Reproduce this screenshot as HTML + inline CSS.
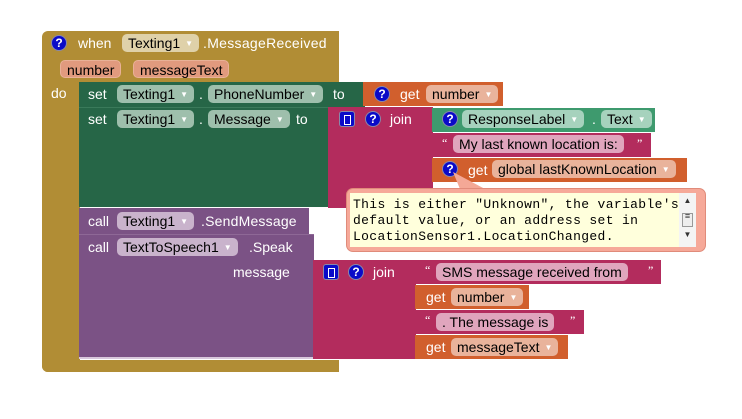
<!DOCTYPE html>
<html><head><style>
*{margin:0;padding:0;box-sizing:border-box}
body{width:742px;height:419px;background:#fff;position:relative;overflow:hidden;font-family:"Liberation Sans",Arial,sans-serif;font-size:14px;color:#fff}
.b{position:absolute}
.t{position:absolute;white-space:nowrap;line-height:17px}
.p{position:absolute;height:18px;line-height:18px;border-radius:5px;color:#000;padding:0 6px;white-space:nowrap}
.p i{font-style:normal;font-size:8px;color:#fff;margin-left:5px;vertical-align:2px}
.q{position:absolute;width:16px;height:16px;border-radius:50%;background:#0a0ac8;border:1px solid #88a;color:#fff;font-weight:bold;font-size:12px;line-height:14px;text-align:center}
.m{position:absolute;width:16px;height:16px;border-radius:3px;background:#0a0ac8;border:1px solid #88a}
.m:after{content:"";position:absolute;left:4px;top:3px;width:5px;height:8px;border:1px solid #fff}
.o{position:absolute;font-size:12px;line-height:12px;font-family:"Liberation Serif",serif}
</style></head><body>
<!-- event block -->
<div class="b" style="left:42px;top:31px;width:297px;height:51px;background:#b18d35;border-radius:6px 0 0 0"></div>
<div class="b" style="left:42px;top:80px;width:38px;height:292px;background:#b18d35;border-radius:0 0 0 6px"></div>
<div class="b" style="left:42px;top:360px;width:297px;height:12px;background:#b18d35;border-radius:0 0 0 6px"></div>
<div class="q" style="left:51px;top:35px">?</div>
<div class="t" style="left:78px;top:35px">when</div>
<div class="p" style="left:122px;top:34px;background:#dfd1a9">Texting1<i>▼</i></div>
<div class="t" style="left:203px;top:35px;letter-spacing:0.3px">.MessageReceived</div>
<div class="p" style="left:60px;top:60px;background:#e19a7e;border:1px solid #e9b197">number</div>
<div class="p" style="left:133px;top:60px;background:#e19a7e;border:1px solid #e9b197">messageText</div>
<div class="t" style="left:51px;top:85px">do</div>
<!-- set phone -->
<div class="b" style="left:79px;top:82px;width:286px;height:25px;background:#266647"></div>
<div class="t" style="left:88px;top:86px">set</div>
<div class="p" style="left:117px;top:85px;background:#9ebfac">Texting1<i>▼</i></div>
<div class="t" style="left:199px;top:86px">.</div>
<div class="p" style="left:208px;top:85px;background:#9ebfac">PhoneNumber<i>▼</i></div>
<div class="t" style="left:333px;top:86px">to</div>
<div class="b" style="left:363px;top:82px;width:140px;height:24px;background:#d15f2d"></div>
<div class="q" style="left:374px;top:86px">?</div>
<div class="t" style="left:400px;top:86px">get</div>
<div class="p" style="left:426px;top:85px;background:#e9b39b">number<i>▼</i></div>
<!-- set message -->
<div class="b" style="left:79px;top:107px;width:250px;height:100px;background:#266647;border-top:1px solid #3a7a5a"></div>
<div class="t" style="left:88px;top:111px">set</div>
<div class="p" style="left:117px;top:110px;background:#9ebfac">Texting1<i>▼</i></div>
<div class="t" style="left:199px;top:111px">.</div>
<div class="p" style="left:208px;top:110px;background:#9ebfac">Message<i>▼</i></div>
<div class="t" style="left:296px;top:111px">to</div>
<div class="b" style="left:328px;top:107px;width:105px;height:101px;background:#b32c5d"></div>
<div class="m" style="left:339px;top:111px"></div>
<div class="q" style="left:365px;top:111px">?</div>
<div class="t" style="left:390px;top:111px">join</div>
<div class="b" style="left:432px;top:108px;width:223px;height:24px;background:#3e9a6e"></div>
<div class="q" style="left:442px;top:111px">?</div>
<div class="p" style="left:462px;top:110px;background:#a6d2bd">ResponseLabel<i>▼</i></div>
<div class="t" style="left:592px;top:111px">.</div>
<div class="p" style="left:601px;top:110px;background:#a6d2bd">Text<i>▼</i></div>
<div class="b" style="left:432px;top:133px;width:219px;height:24px;background:#b32c5d"></div>
<div class="o" style="left:442px;top:137px">“</div>
<div class="p" style="left:453px;top:135px;background:#e0a5bd">My last known location is:</div>
<div class="o" style="left:637px;top:137px">”</div>
<div class="b" style="left:432px;top:158px;width:255px;height:24px;background:#d15f2d"></div>
<div class="q" style="left:442px;top:161px">?</div>
<div class="t" style="left:468px;top:162px">get</div>
<div class="p" style="left:492px;top:160px;background:#e9b39b">global lastKnownLocation<i>▼</i></div>
<!-- tooltip -->
<svg class="b" style="left:345px;top:172px" width="362" height="82"><path d="M115 17 L108 0 L140 17 Z" fill="#f4a896"/></svg>
<div class="b" style="left:346px;top:188px;width:360px;height:64px;background:#f6a999;border:1px solid #e08b7a;border-radius:7px"></div>
<div class="b" style="left:350px;top:193px;width:346px;height:54px;background:#ffffdc"></div>
<div class="t" style="left:353px;top:197px;color:#000;font-family:'Liberation Mono',monospace;font-size:13px;letter-spacing:0.35px;line-height:16px">This is either "Unknown", the variable's<br>default value, or an address set in<br>LocationSensor1.LocationChanged.</div>
<div class="b" style="left:679px;top:193px;width:17px;height:54px;background:#f4f4f4;font-size:8px;color:#333;text-align:center;line-height:16px">▲<br><span style="display:inline-block;width:11px;height:14px;border:1px solid #999;background:#eee;line-height:4px;font-size:9px">≡</span><br>▼</div>
<!-- call sendmessage -->
<div class="b" style="left:79px;top:208px;width:230px;height:26px;background:#7b5285"></div>
<div class="t" style="left:88px;top:213px">call</div>
<div class="p" style="left:117px;top:212px;background:#c9b3cc">Texting1<i>▼</i></div>
<div class="t" style="left:201px;top:213px;letter-spacing:0.2px">.SendMessage</div>
<!-- speak -->
<div class="b" style="left:79px;top:234px;width:235px;height:125px;background:#7b5285;border-top:1px solid #8e6896;border-bottom:2px solid #d8c8dc"></div>
<div class="t" style="left:88px;top:239px">call</div>
<div class="p" style="left:117px;top:238px;background:#c9b3cc">TextToSpeech1<i>▼</i></div>
<div class="t" style="left:249px;top:239px">.Speak</div>
<div class="t" style="left:233px;top:264px">message</div>
<div class="b" style="left:313px;top:260px;width:103px;height:99px;background:#b32c5d"></div>
<div class="m" style="left:323px;top:264px"></div>
<div class="q" style="left:348px;top:264px">?</div>
<div class="t" style="left:373px;top:264px">join</div>
<div class="b" style="left:415px;top:260px;width:246px;height:24px;background:#b32c5d"></div>
<div class="o" style="left:425px;top:264px">“</div>
<div class="p" style="left:436px;top:263px;background:#e0a5bd">SMS message received from</div>
<div class="o" style="left:648px;top:264px">”</div>
<div class="b" style="left:415px;top:285px;width:114px;height:24px;background:#d15f2d"></div>
<div class="t" style="left:426px;top:289px">get</div>
<div class="p" style="left:451px;top:288px;background:#e9b39b">number<i>▼</i></div>
<div class="b" style="left:415px;top:310px;width:169px;height:24px;background:#b32c5d"></div>
<div class="o" style="left:425px;top:314px">“</div>
<div class="p" style="left:436px;top:313px;background:#e0a5bd">. The message is</div>
<div class="o" style="left:570px;top:314px">”</div>
<div class="b" style="left:415px;top:335px;width:153px;height:24px;background:#d15f2d"></div>
<div class="t" style="left:426px;top:339px">get</div>
<div class="p" style="left:451px;top:338px;background:#e9b39b">messageText<i>▼</i></div>
</body></html>
